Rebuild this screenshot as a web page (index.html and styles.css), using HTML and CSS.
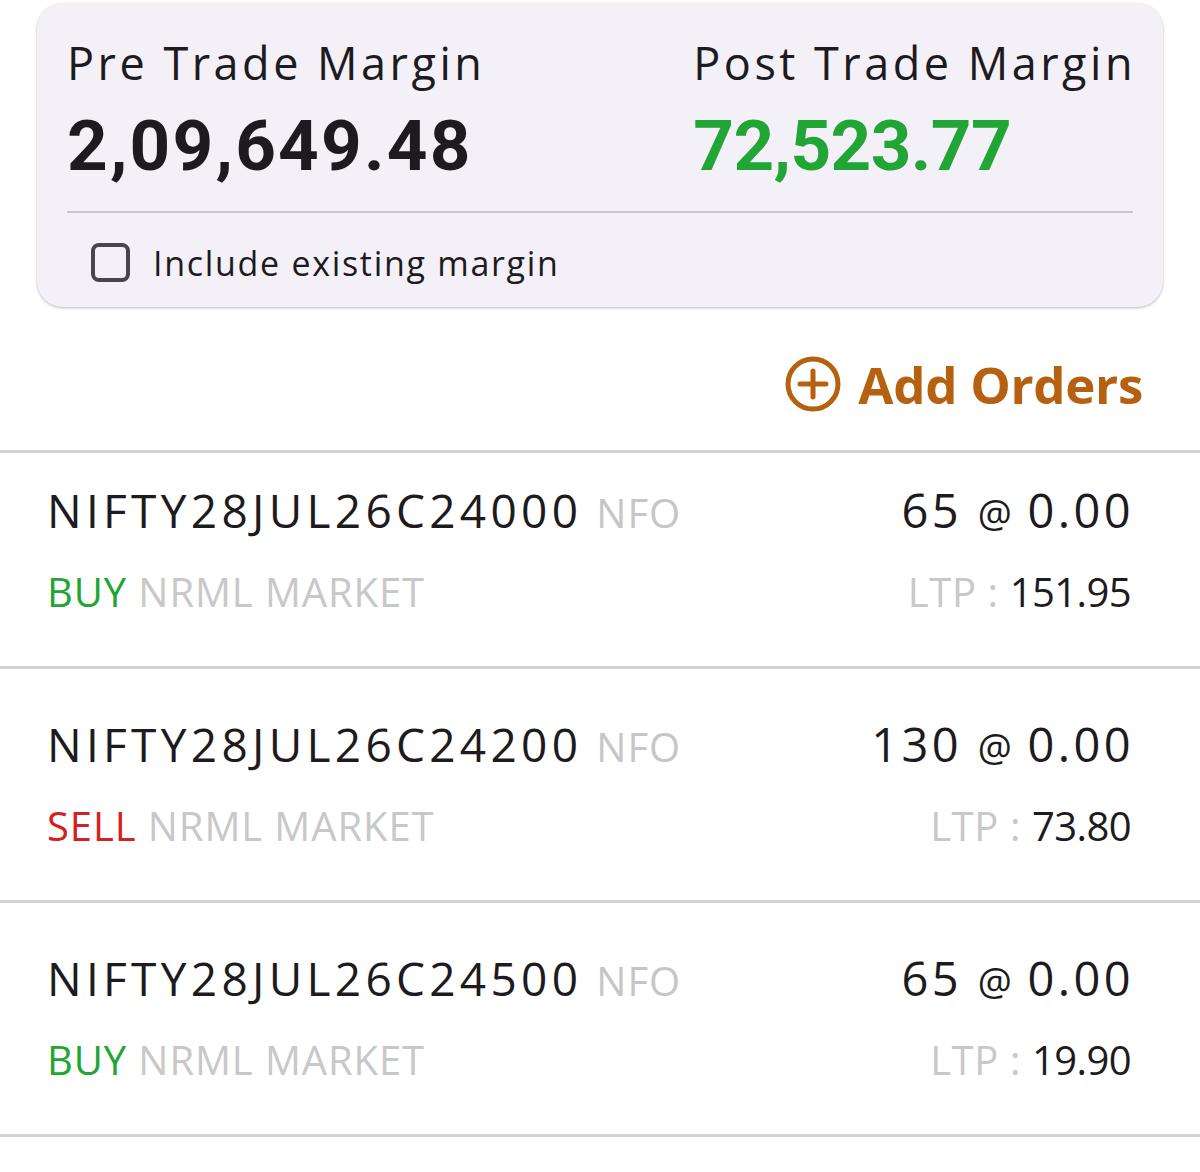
FILE: index.html
```html
<!DOCTYPE html>
<html lang="en">
<head>
<meta charset="utf-8">
<title>Basket Margin</title>
<link rel="stylesheet" href="styles.css">
</head>
<body>
  <section class="card">
    <div class="margins">
      <div class="margin-col">
        <div class="margin-label">Pre Trade Margin</div>
        <div class="margin-value">2,09,649.48</div>
      </div>
      <div class="margin-col">
        <div class="margin-label">Post Trade Margin</div>
        <div class="margin-value positive">72,523.77</div>
      </div>
    </div>
    <div class="card-divider"></div>
    <label class="include">
      <span class="checkbox"></span>
      <span class="include-text">Include existing margin</span>
    </label>
  </section>

  <div class="add-bar">
    <button class="add-btn" type="button">
      <svg class="add-icon" width="56" height="56" viewBox="0 0 56 56" fill="none" stroke="currentColor" stroke-width="5" stroke-linecap="round">
        <circle cx="28" cy="28" r="25"/>
        <path d="M15 28H41M28 15V41"/>
      </svg>
      <span>Add Orders</span>
    </button>
  </div>

  <ul class="orders">
    <li class="order first">
      <div class="order-line">
        <div class="symbol">NIFTY28JUL26C24000<span class="exch">NFO</span></div>
        <div class="qty">65 <span class="at">@</span> <span class="price">0.00</span></div>
      </div>
      <div class="order-line sub">
        <div class="meta"><span class="buy">BUY</span> NRML MARKET</div>
        <div class="ltp">LTP : <span class="ltp-val">151.95</span></div>
      </div>
    </li>
    <li class="order">
      <div class="order-line">
        <div class="symbol">NIFTY28JUL26C24200<span class="exch">NFO</span></div>
        <div class="qty">130 <span class="at">@</span> <span class="price">0.00</span></div>
      </div>
      <div class="order-line sub">
        <div class="meta"><span class="sell">SELL</span> NRML MARKET</div>
        <div class="ltp">LTP : <span class="ltp-val">73.80</span></div>
      </div>
    </li>
    <li class="order">
      <div class="order-line">
        <div class="symbol">NIFTY28JUL26C24500<span class="exch">NFO</span></div>
        <div class="qty">65 <span class="at">@</span> <span class="price">0.00</span></div>
      </div>
      <div class="order-line sub">
        <div class="meta"><span class="buy">BUY</span> NRML MARKET</div>
        <div class="ltp">LTP : <span class="ltp-val">19.90</span></div>
      </div>
    </li>
  </ul>
</body>
</html>
```

FILE: styles.css
```css
* { box-sizing: border-box; }

html, body {
  margin: 0;
  padding: 0;
  background: #ffffff;
}

body {
  font-family: "Open Sans", "Noto Sans", sans-serif;
  color: #1d1b20;
  width: 1200px;
  height: 1172px;
  overflow: hidden;
}

/* ---------- margin card ---------- */
.card {
  margin: 3px 37px 0;
  padding: 37px 27px 25px 30px;
  background: #f4f0f8;
  border-radius: 26px;
  box-shadow: 0 1px 3px rgba(0, 0, 0, 0.28);
}

.margins {
  display: flex;
  justify-content: space-between;
}

.margin-label {
  font-size: 45px;
  line-height: 45px;
  letter-spacing: 3.5px;
  color: #1d1b20;
}

.margin-value {
  margin-top: 26px;
  font-family: Roboto, "Liberation Sans", sans-serif;
  font-weight: 700;
  font-size: 71px;
  line-height: 70px;
  letter-spacing: 2.2px;
  color: #1d1b20;
}

.margin-value.positive {
  color: #21a534;
  letter-spacing: -0.6px;
}

.card-divider {
  margin-top: 30px;
  margin-right: 3px;
  height: 2px;
  background: #cbc5d2;
}

.include {
  display: flex;
  align-items: center;
  margin-top: 30px;
  padding-left: 24px;
}

.checkbox {
  width: 39px;
  height: 39px;
  border: 4px solid #49454f;
  border-radius: 8px;
  flex: none;
}

.include-text {
  margin-left: 23px;
  font-size: 34px;
  line-height: 34px;
  letter-spacing: 1.7px;
  color: #1d1b20;
}

/* ---------- add orders ---------- */
.add-bar {
  display: flex;
  justify-content: flex-end;
  padding: 49px 57px 38px 0;
  border-bottom: 3px solid #d3d0d8;
}

.add-btn {
  display: flex;
  align-items: center;
  gap: 17px;
  padding: 0;
  border: 0;
  background: none;
  font-family: "Open Sans", "Noto Sans", sans-serif;
  font-weight: 700;
  font-size: 51px;
  line-height: 51px;
  letter-spacing: -0.3px;
  color: #b5610f;
}

.add-icon { display: block; flex: none; }

/* ---------- orders ---------- */
.orders {
  list-style: none;
  margin: 0;
  padding: 0;
}

.order {
  padding: 52px 66px 54px 47px;
  border-bottom: 3px solid #d3d0d8;
}

.order.first { padding-top: 34px; }

.order-line {
  display: flex;
  justify-content: space-between;
  align-items: baseline;
}

.order-line.sub { margin-top: 36px; }

.symbol {
  font-size: 46px;
  line-height: 46px;
  letter-spacing: 4.3px;
  color: #1d1b20;
}

.exch {
  margin-left: 14px;
  font-size: 40px;
  letter-spacing: 1px;
  color: #c6c6c6;
}

.qty {
  font-size: 47px;
  line-height: 46px;
  letter-spacing: 3.4px;
  color: #1d1b20;
}

.at {
  font-size: 38px;
  letter-spacing: 0;
}

.price { font-weight: 500; }

.meta {
  font-size: 40px;
  line-height: 40px;
  letter-spacing: 0.9px;
  color: #c8c8c8;
}

.buy { color: #22a533; }
.sell { color: #d3211f; }

.ltp {
  margin-right: 3px;
  font-size: 40px;
  line-height: 40px;
  letter-spacing: 0.6px;
  color: #c8c8c8;
}

.ltp-val { color: #1d1b20; letter-spacing: -0.6px; }
```
